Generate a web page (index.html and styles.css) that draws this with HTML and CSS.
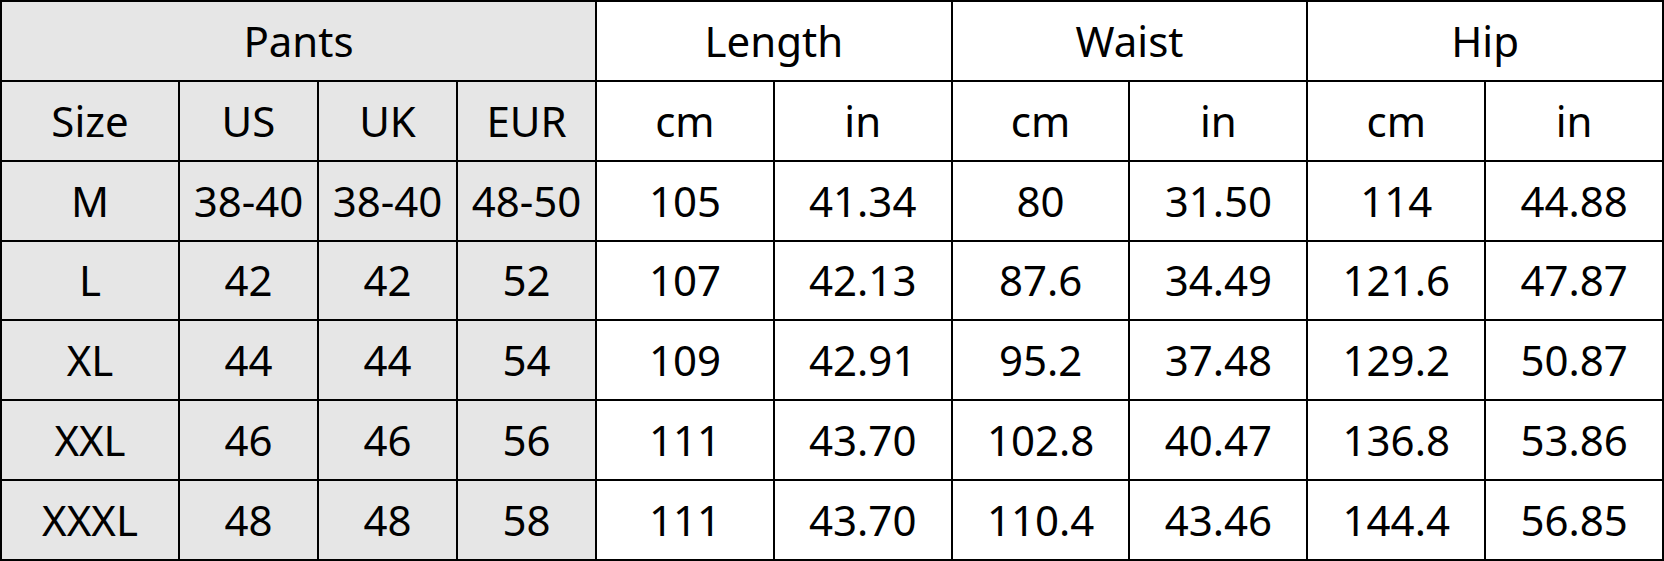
FILE: index.html
```html
<!DOCTYPE html>
<html>
<head>
<meta charset="utf-8">
<link rel="stylesheet" href="styles.css">
</head>
<body>
<div class="chart">
  <div class="cell grey span4">Pants</div>
  <div class="cell span2">Length</div>
  <div class="cell span2">Waist</div>
  <div class="cell span2">Hip</div>

  <div class="cell grey">Size</div>
  <div class="cell grey">US</div>
  <div class="cell grey">UK</div>
  <div class="cell grey">EUR</div>
  <div class="cell">cm</div><div class="cell">in</div>
  <div class="cell">cm</div><div class="cell">in</div>
  <div class="cell">cm</div><div class="cell">in</div>

  <div class="cell grey">M</div><div class="cell grey">38-40</div><div class="cell grey">38-40</div><div class="cell grey">48-50</div>
  <div class="cell">105</div><div class="cell">41.34</div><div class="cell">80</div><div class="cell">31.50</div><div class="cell">114</div><div class="cell">44.88</div>

  <div class="cell grey">L</div><div class="cell grey">42</div><div class="cell grey">42</div><div class="cell grey">52</div>
  <div class="cell">107</div><div class="cell">42.13</div><div class="cell">87.6</div><div class="cell">34.49</div><div class="cell">121.6</div><div class="cell">47.87</div>

  <div class="cell grey">XL</div><div class="cell grey">44</div><div class="cell grey">44</div><div class="cell grey">54</div>
  <div class="cell">109</div><div class="cell">42.91</div><div class="cell">95.2</div><div class="cell">37.48</div><div class="cell">129.2</div><div class="cell">50.87</div>

  <div class="cell grey">XXL</div><div class="cell grey">46</div><div class="cell grey">46</div><div class="cell grey">56</div>
  <div class="cell">111</div><div class="cell">43.70</div><div class="cell">102.8</div><div class="cell">40.47</div><div class="cell">136.8</div><div class="cell">53.86</div>

  <div class="cell grey">XXXL</div><div class="cell grey">48</div><div class="cell grey">48</div><div class="cell grey">58</div>
  <div class="cell">111</div><div class="cell">43.70</div><div class="cell">110.4</div><div class="cell">43.46</div><div class="cell">144.4</div><div class="cell">56.85</div>
</div>
</body>
</html>
```
FILE: styles.css
```css
html, body {
  margin: 0;
  padding: 0;
  background: #ffffff;
}
.chart {
  box-sizing: border-box;
  width: 1664px;
  height: 561px;
  padding: 2px;
  background: #000000;
  display: grid;
  grid-template-columns: 176px 137px 137px 137px repeat(6, 1fr);
  grid-template-rows: repeat(7, 1fr);
  gap: 2px;
  font-family: "Noto Sans", "Open Sans", sans-serif;
  font-size: 42px;
  color: #000;
}
.cell {
  background: #ffffff;
  display: flex;
  align-items: center;
  justify-content: center;
  line-height: 1;
}
.grey {
  background: #e6e6e6;
}
.span4 { grid-column: span 4; }
.span2 { grid-column: span 2; }
```
